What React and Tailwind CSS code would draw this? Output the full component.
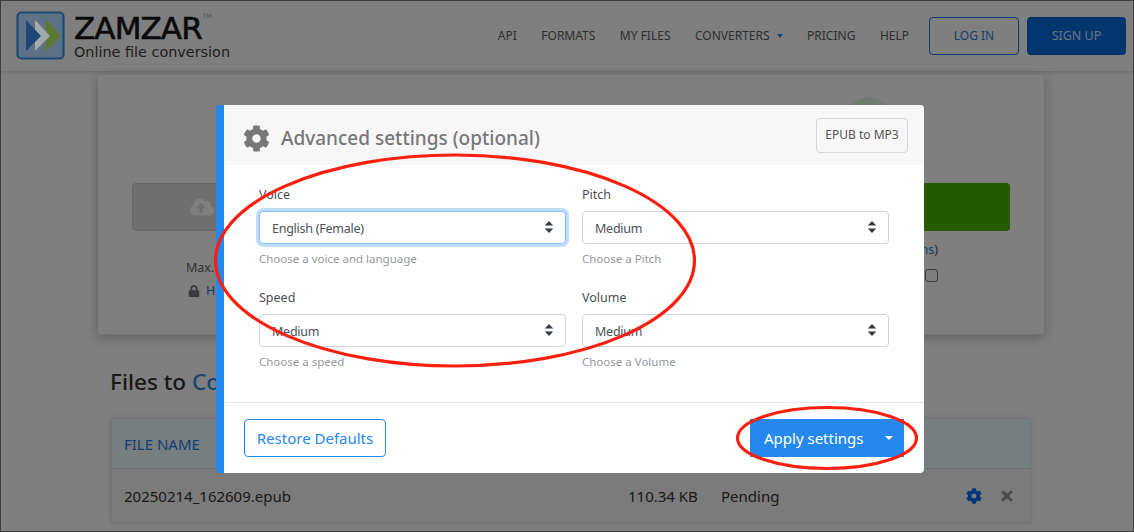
import React from "react";
import { FaCog, FaLock, FaTimes, FaCloudUploadAlt } from "react-icons/fa";

const Updown = () => (
  <svg width="10" height="14" viewBox="0 0 10 14" className="absolute right-[12px] top-[9px] pointer-events-none">
    <path d="M5 1 L9.2 5.6 H0.8 Z M5 13 L9.2 8.4 H0.8 Z" fill="#343a40" />
  </svg>
);

const Field = ({ label, value, hint, focus }) => (
  <div className="flex w-[307px] flex-col">
    <label className="h-[27px] pt-[1px] text-[12.5px] leading-[19px] text-[#4b4f54]">{label}</label>
    <div className="relative h-[33px]">
      <select
        defaultValue={value}
        className={
          focus
            ? "h-[33px] w-full appearance-none rounded-[4px] border border-[#80bdff] bg-white pl-[12px] pt-[3px] text-[12.5px] tracking-[-0.25px] text-[#495057] shadow-[0_0_0_3px_rgba(0,123,255,0.25)] outline-none"
            : "h-[33px] w-full appearance-none rounded-[4px] border border-[#ced4da] bg-white pl-[12px] pt-[3px] text-[12.5px] tracking-[-0.25px] text-[#495057] outline-none"
        }
      >
        <option>{value}</option>
      </select>
      <Updown />
    </div>
    <p className="mt-[6px] h-[21px] text-[11.5px] leading-[17px] text-[#93989e]">{hint}</p>
  </div>
);

const NavLink = ({ children }) => <a className="text-[12px] text-[#5c5c5c]">{children}</a>;

export default function App() {
  return (
    <div className="relative h-[532px] w-[1134px] overflow-hidden border border-[#3c3c3c] bg-white font-['Noto_Sans',sans-serif]">
      <header className="flex h-[71px] items-center border-b border-[#e4e4e4] pl-[15px] pr-[7px] shadow-[0_1px_3px_rgba(0,0,0,0.12)]">
        <svg width="50" height="50" viewBox="0 0 50 50" className="relative z-10 shrink-0">
          <rect x="1.5" y="1.5" width="46" height="46" rx="4" fill="#5f7285" stroke="#1a4a7a" strokeWidth="2.2" />
          <path d="M30 9 L45 25 L30 40 Z" fill="#5c7a2e" />
          <path d="M19 9 L34 25 L19 40 Z" fill="#a4a9ae" />
          <path d="M10 9 L25 25 L10 40 Z" fill="#1c4674" />
        </svg>
        <div className="relative z-10 ml-[8px] flex flex-col font-['DejaVu_Sans',sans-serif] text-[#0a0a0a]">
          <div className="flex items-start">
            <span className="text-[31px] font-normal leading-[32px] tracking-[-0.9px] [-webkit-text-stroke:0.6px_#0a0a0a]">ZAMZAR</span>
            <span className="ml-[1px] text-[6px] leading-[8px] text-[#555]">TM</span>
          </div>
          <span className="text-[14.4px] leading-[16px] text-[#1c1c1c]">Online file conversion</span>
        </div>
        <nav className="ml-auto flex items-center gap-[24.5px]">
          <NavLink>API</NavLink>
          <NavLink>FORMATS</NavLink>
          <NavLink>MY FILES</NavLink>
          <a className="flex items-center gap-[7px] text-[12px] text-[#5c5c5c]">
            CONVERTERS
            <span className="h-0 w-0 border-x-[3.5px] border-t-[4px] border-x-transparent border-t-[#2088e0]" />
          </a>
          <NavLink>PRICING</NavLink>
          <NavLink>HELP</NavLink>
        </nav>
        <a className="ml-[20px] flex h-[38px] w-[90px] items-center justify-center rounded-[4px] border border-[#1670e0] text-[12px] text-[#1f7ae0]">LOG IN</a>
        <a className="ml-[8px] flex h-[38px] w-[99px] items-center justify-center rounded-[4px] bg-[#066adc] text-[12.5px] text-[#d8e8ff]">SIGN UP</a>
      </header>

      <main className="px-[96px]">
        <section className="relative mt-[2px] h-[261px] w-[948px] rounded-[4px] border border-[#e4e4e4] px-[34px] pt-[108px] shadow-[0_3px_12px_rgba(0,0,0,0.25)]">
          <div className="absolute left-[749px] top-[22px] h-[44px] w-[44px] rounded-full bg-[#e0f4e0]" />
          <div className="flex justify-between">
            <div className="flex h-[48px] w-[320px] items-center rounded-[4px] border border-[#ccc] bg-[#dedede] pl-[57px]">
              <FaCloudUploadAlt className="text-[24px] text-white" />
            </div>
            <div className="h-[48px] w-[320px] rounded-[4px] bg-[#48b400]" />
          </div>
          <div className="flex justify-between pr-[72px]">
            <div className="flex flex-col pl-[54px] pt-[28px] text-[12.5px] text-[#666]">
              <span className="leading-[18px]">Max. file size</span>
              <span className="mt-[5px] flex items-center gap-[6px] leading-[18px] text-[#1670e0]">
                <FaLock className="ml-[2px] text-[12px] text-[#777]" />How are my files protected?
              </span>
            </div>
            <div className="flex flex-col items-end pt-[10px] text-[12.5px]">
              <span className="leading-[18px] text-[#555]">(<a className="text-[#2088e0]">Terms</a>)</span>
              <span className="mt-[10px] h-[13px] w-[13px] rounded-[3px] border border-[#777] bg-white" />
            </div>
          </div>
        </section>

        <h2 className="mt-[30px] ml-[13px] text-[22.5px] font-medium leading-[34px] text-[#333]">
          Files to <span className="text-[#2a88e0]">Convert</span>
        </h2>

        <div className="mt-[19px] ml-[14px] w-[920px] border border-[#e8e8e8] shadow-[0_0_6px_rgba(0,0,0,0.12)]">
          <div className="flex h-[50px] items-center border-b border-[#ddd] bg-[#eefcff] pl-[12px] pt-[2px] text-[15px] text-[#2a7ce8]">FILE NAME</div>
          <div className="flex h-[53px] items-center bg-[#f6f6f6] pl-[12px] pt-[1px] text-[15px] text-[#333]">
            <span className="w-[504px]">20250214_162609.epub</span>
            <span className="w-[93px]">110.34 KB</span>
            <span className="w-[245px]">Pending</span>
            <FaCog className="text-[16px] text-[#066af4]" />
            <FaTimes className="ml-[17px] text-[16px] text-[#949494]" />
          </div>
        </div>
      </main>

      <div className="absolute inset-0 bg-black/50" />

      <div className="absolute left-[215px] top-[104px] flex h-[368px] w-[708px] flex-col overflow-hidden rounded-[4px] border-l-[8px] border-l-[#2488ee] bg-white">
        <div className="flex h-[60px] items-center justify-between bg-[#f7f7f7] pl-[19px] pr-[16px]">
          <div className="flex items-center gap-[11px] pt-[6px]">
            <FaCog className="text-[27px] text-[#777]" />
            <h3 className="text-[19px] font-medium leading-[27px] text-[#777]">Advanced settings (optional)</h3>
          </div>
          <div className="flex h-[35px] w-[92px] items-center justify-center rounded-[4px] border border-[#d5d5d5] text-[12px] text-[#555]">EPUB to MP3</div>
        </div>
        <div className="grid flex-1 grid-cols-[307px_307px] content-start gap-x-[16px] gap-y-[16px] pl-[35px] pt-[19px]">
          <Field label="Voice" value="English (Female)" hint="Choose a voice and language" focus />
          <Field label="Pitch" value="Medium" hint="Choose a Pitch" />
          <Field label="Speed" value="Medium" hint="Choose a speed" />
          <Field label="Volume" value="Medium" hint="Choose a Volume" />
        </div>
        <div className="flex h-[71px] items-start justify-between border-t border-[#e3e6e9] pl-[20px] pr-[20px] pt-[16px]">
          <button className="h-[38px] w-[142px] rounded-[4px] border border-[#2488ee] text-[15px] text-[#2488ee]">Restore Defaults</button>
          <button className="flex h-[38px] w-[154px] items-center bg-[#2488ee] pl-[14px] text-[15px] text-white">
            Apply settings
            <span className="ml-[22px] h-0 w-0 border-x-[4.5px] border-t-[4.5px] border-x-transparent border-t-white" />
          </button>
        </div>
      </div>

      <svg width="1134" height="532" viewBox="0 0 1134 532" className="pointer-events-none absolute left-[-1px] top-[-1px]">
        <ellipse cx="455" cy="260.5" rx="239.5" ry="105.5" fill="none" stroke="#fb1f10" strokeWidth="3.2" />
        <ellipse cx="827" cy="438" rx="89.5" ry="30.5" fill="none" stroke="#fb1f10" strokeWidth="3.2" />
      </svg>
    </div>
  );
}
